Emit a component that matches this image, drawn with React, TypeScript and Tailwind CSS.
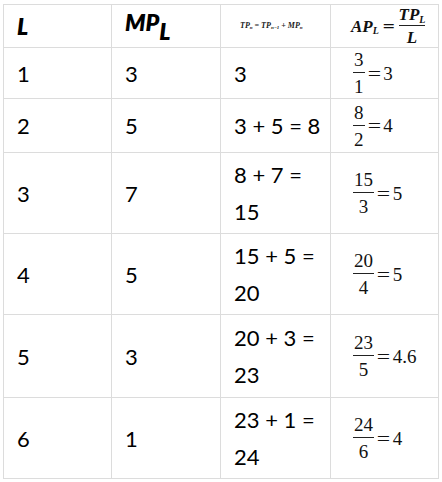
import React from "react"

type Row = {
  l: string
  mp: string
  tp: string
  num: string
  den: string
  ap: string
  h: string
}

const rows: Row[] = [
  { l: "1", mp: "3", tp: "3", num: "3", den: "1", ap: "3", h: "h-[51px]" },
  { l: "2", mp: "5", tp: "3 + 5 = 8", num: "8", den: "2", ap: "4", h: "h-[54px]" },
  { l: "3", mp: "7", tp: "8 + 7 = 15", num: "15", den: "3", ap: "5", h: "h-[81px]" },
  { l: "4", mp: "5", tp: "15 + 5 = 20", num: "20", den: "4", ap: "5", h: "h-[81px]" },
  { l: "5", mp: "3", tp: "20 + 3 = 23", num: "23", den: "5", ap: "4.6", h: "h-[83px]" },
  { l: "6", mp: "1", tp: "23 + 1 = 24", num: "24", den: "6", ap: "4", h: "h-[81px]" },
]

function Fraction({ num, den, ap }: { num: string; den: string; ap: string }) {
  return (
    <div className="flex items-center font-['Liberation_Serif',serif] text-[19px] leading-none text-[#111]">
      <div className="flex flex-col items-center">
        <span className="px-[1px] pb-[3px]">{num}</span>
        <span className="h-px w-full bg-[#222]" />
        <span className="px-[1px] pt-[4px]">{den}</span>
      </div>
      <span className="ml-[4px] scale-x-125">=</span>
      <span className="ml-[4px]">{ap}</span>
    </div>
  )
}

const cell = "border border-[#dcdcdc] align-middle"

export default function App() {
  return (
    <div className="bg-white pl-[3px] pt-[4px] w-[442px] h-[482px] font-['Lato',sans-serif] text-black">
      <table className="table-fixed border-collapse w-[435px]">
        <colgroup>
          <col className="w-[108px]" />
          <col className="w-[109px]" />
          <col className="w-[110px]" />
          <col className="w-[108px]" />
        </colgroup>
        <thead>
          <tr className="h-[43px]">
            <th className={`${cell} pl-[13px] text-left text-[23px] font-extrabold italic`}>L</th>
            <th className={`${cell} pl-[13px] text-left text-[23px] font-extrabold italic`}>
              <span className="relative -top-[4px]">
                MP<span className="relative top-[9px]">L</span>
              </span>
            </th>
            <th className={`${cell} pl-[19px] text-left font-['Liberation_Serif',serif] text-[8px] font-bold italic text-[#222]`}>
              TP<sub className="text-[5px]">n</sub> = TP<sub className="text-[5px]">n−1</sub> + MP
              <sub className="text-[5px]">n</sub>
            </th>
            <th className={`${cell} pl-[20px] text-left`}>
              <div className="flex items-center font-['Liberation_Serif',serif] text-[17px] font-bold italic leading-none text-[#111]">
                <span>
                  AP<sub className="text-[10px]">L</sub>
                </span>
                <span className="mx-[5px] not-italic scale-x-125">=</span>
                <div className="flex flex-col items-center">
                  <span className="pb-[2px]">
                    TP<sub className="text-[10px]">L</sub>
                  </span>
                  <span className="h-px w-full bg-[#222]" />
                  <span className="pt-[3px]">L</span>
                </div>
              </div>
            </th>
          </tr>
        </thead>
        <tbody className="text-[22px] leading-[37px]">
          {rows.map((r) => (
            <tr key={r.l} className={r.h}>
              <td className={`${cell} pl-[13px]`}>{r.l}</td>
              <td className={`${cell} pl-[13px]`}>{r.mp}</td>
              <td className={`${cell} pl-[13px] pr-[3px]`}>{r.tp}</td>
              <td className={`${cell} pl-[22px]`}>
                <Fraction num={r.num} den={r.den} ap={r.ap} />
              </td>
            </tr>
          ))}
        </tbody>
      </table>
    </div>
  )
}
